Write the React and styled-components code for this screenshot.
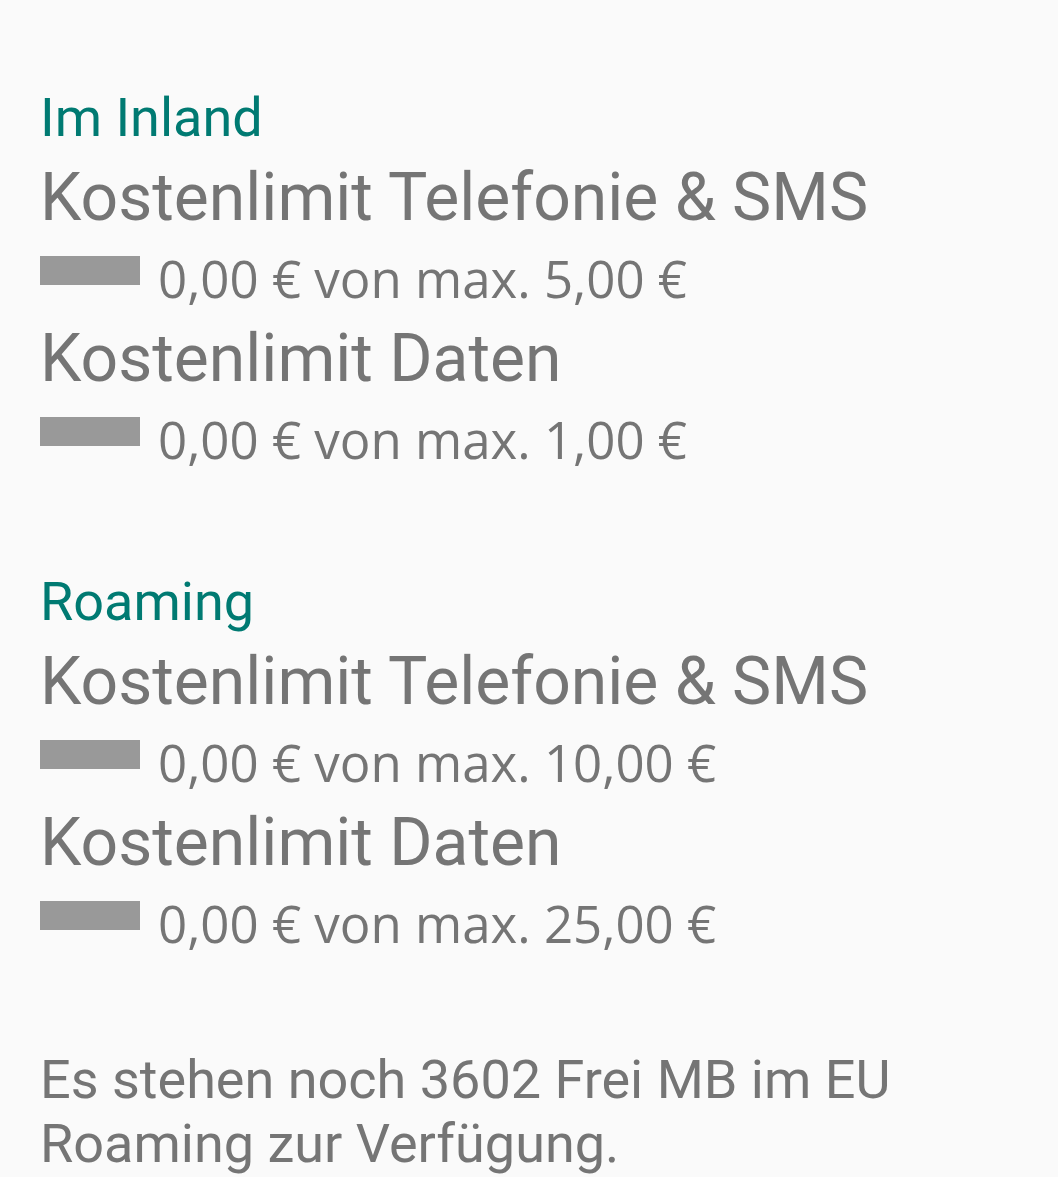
import React from 'react';
import styled, { createGlobalStyle } from 'styled-components';

const GlobalStyle = createGlobalStyle`
    html, body {
        margin: 0;
        padding: 0;
        background: #fafafa;
    }
`

const Page = styled.div`
    padding: 80px 40px 0 40px;
    font-family: Roboto, "Noto Sans", sans-serif;
    color: #757575;
`

const Section = styled.section`
    display: flex;
    flex-direction: column;
    margin-bottom: 86px;
`

const Header = styled.h2`
    margin: 0;
    font-size: 54px;
    font-weight: 400;
    line-height: 76px;
    color: #007a72;
`

const Title = styled.div`
    font-size: 66px;
    line-height: 83px;
`

const Row = styled.div`
    display: flex;
    align-items: center;
    gap: 18px;
    height: 78px;
`

const Bar = styled.div`
    width: 100px;
    height: 29px;
    background: #999999;
    margin-top: -15px;
`

const Value = styled.span`
    font-family: "Open Sans", "Noto Sans", sans-serif;
    font-size: 51px;
`

const Note = styled.p`
    margin: 11px 0 0 0;
    font-size: 54px;
    line-height: 64px;
`

const data = [
    { header: 'Im Inland', items: [
        { title: 'Kostenlimit Telefonie & SMS', max: '5,00' },
        { title: 'Kostenlimit Daten', max: '1,00' },
    ]},
    { header: 'Roaming', items: [
        { title: 'Kostenlimit Telefonie & SMS', max: '10,00' },
        { title: 'Kostenlimit Daten', max: '25,00' },
    ]},
];

const App = () => {
    return (
        <Page>
            <GlobalStyle />
            {data.map((s) => (
                <Section key={s.header}>
                    <Header>{s.header}</Header>
                    {s.items.map((it) => (
                        <React.Fragment key={it.title}>
                            <Title>{it.title}</Title>
                            <Row>
                                <Bar />
                                <Value>0,00 € von max. {it.max} €</Value>
                            </Row>
                        </React.Fragment>
                    ))}
                </Section>
            ))}
            <Note>Es stehen noch 3602 Frei MB im EU Roaming zur Verfügung.</Note>
        </Page>
    );
}

export default App;
